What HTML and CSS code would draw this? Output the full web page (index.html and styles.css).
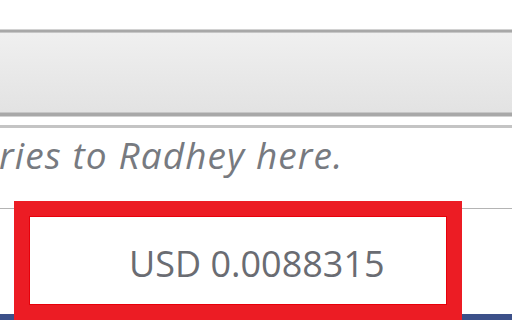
FILE: index.html
```html
<!DOCTYPE html>
<html>
<head>
<meta charset="utf-8">
<link rel="stylesheet" href="styles.css">
</head>
<body>
<div class="page">
  <div class="top-space"></div>
  <div class="toolbar"></div>
  <div class="gap"></div>
  <div class="notes">
    <p class="placeholder">ries to Radhey here.</p>
  </div>
  <div class="lower"></div>
  <div class="navbar"></div>
  <div class="price-box">
    <span class="price">USD 0.0088315</span>
  </div>
</div>
</body>
</html>
```

FILE: styles.css
```css
html, body {
  margin: 0;
  padding: 0;
  background: #ffffff;
}
.page {
  position: relative;
  width: 512px;
  height: 320px;
  overflow: hidden;
  display: flex;
  flex-direction: column;
}
.top-space {
  height: 29px;
  flex: none;
}
.toolbar {
  flex: none;
  height: 80px;
  border-top: 1px solid #d2d2d2;
  border-bottom: 1px solid #d2d2d2;
  box-shadow: inset 0 2px 0 #a8a8a8, inset 0 3px 0 #c6c6c6, inset 0 -3px 0 #a8a8a8, inset 0 -4px 0 #c6c6c6;
  padding: 3px 0;
  background: linear-gradient(#f0f0f0, #e2e2e2);
}
.gap {
  flex: none;
  height: 8px;
}
.notes {
  flex: none;
  height: 80px;
  border-top: 3px solid #c4c4c4;
  border-bottom: 1px solid #b4b4b4;
  display: flex;
  align-items: flex-start;
}
.placeholder {
  margin: 3px 0 0 -1px;
  font-family: "Open Sans", sans-serif;
  font-style: italic;
  font-size: 37px;
  letter-spacing: 1.1px;
  line-height: 48px;
  color: #777a80;
  white-space: nowrap;
}
.lower {
  flex: 1;
}
.navbar {
  flex: none;
  height: 6px;
  background: #3c5089;
}
.price-box {
  position: absolute;
  left: 14px;
  top: 201px;
  width: 448px;
  height: 119px;
  box-sizing: border-box;
  border: 15px solid #ec1c24;
  outline: 1px solid #e8000a;
  outline-offset: -16px;
  background: #ffffff;
  display: flex;
  align-items: center;
  padding-left: 100px;
}
.price {
  font-family: "Open Sans", sans-serif;
  font-size: 36px;
  color: #6a6c72;
  white-space: nowrap;
  margin-top: 6px;
}
```
